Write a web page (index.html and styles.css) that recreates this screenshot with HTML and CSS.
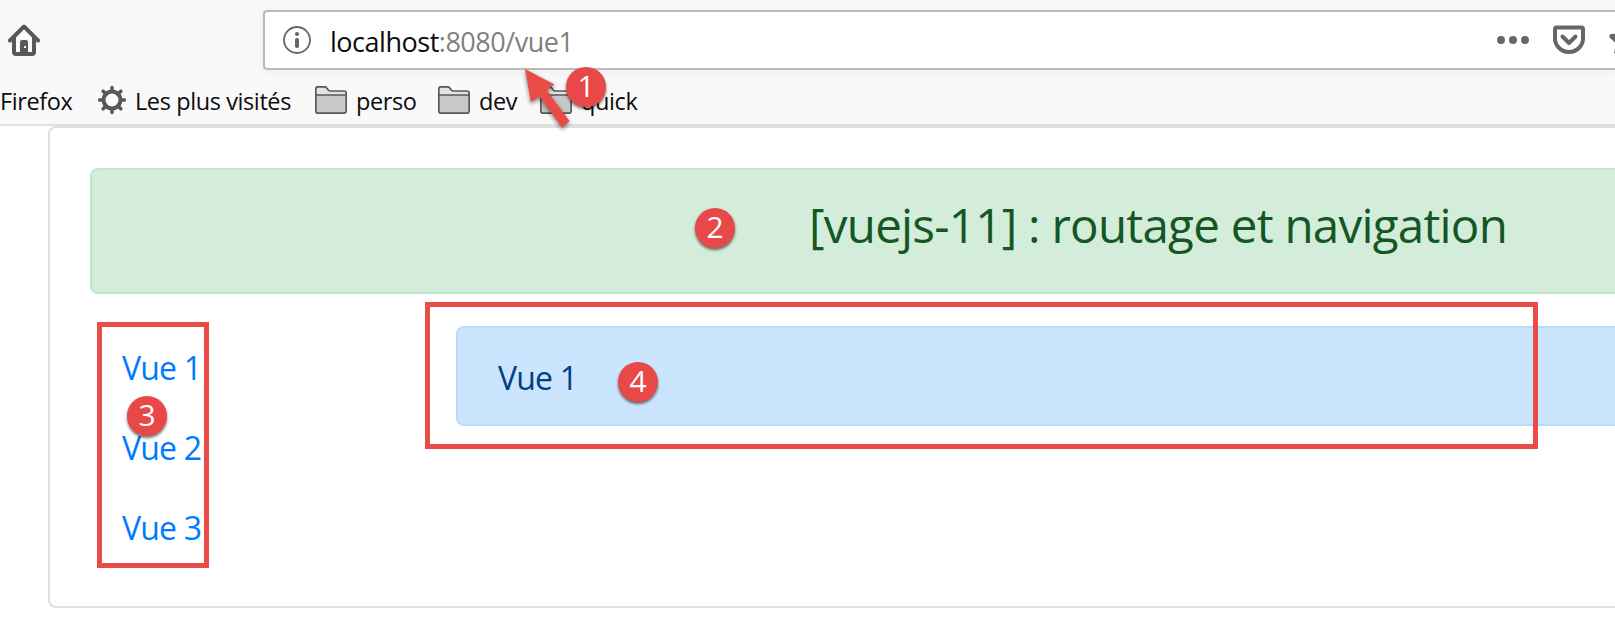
FILE: index.html
```html
<!DOCTYPE html>
<html lang="fr">
<head>
<meta charset="utf-8">
<title>vuejs-11</title>
<link rel="stylesheet" href="styles.css">
</head>
<body>
<svg class="defs" width="0" height="0" aria-hidden="true">
  <symbol id="folder" viewBox="0 0 32 28">
    <path d="M1 9V3q0-2 2-2h6.500q1.500 0 2.500 1.500l1.500 2q.6.500 1.500.500H29q2 0 2 2v2z" fill="#e3e3e4"/>
    <path d="M1 9h30v16q0 2-2 2H3q-2 0-2-2z" fill="#c8c8ca"/>
    <path d="M.8 9h30.400M.8 3q0-2.200 2.200-2.200h6.500q1.500 0 2.500 1.500l1.500 2q.6.700 1.500.700H29q2.200 0 2.200 2V25q0 2.200-2.200 2.200H3Q.8 27.200.8 25z" fill="none" stroke="#58585a" stroke-width="1.700"/>
  </symbol>
</svg>
<header class="browser">
  <div class="toolbar">
    <svg class="home" width="32" height="32" viewBox="0 0 32 32">
      <path d="M2 16.500 16 2.500l14 14M6 14v14q0 2 2 2h16q2 0 2-2V14" fill="none" stroke="#58585a" stroke-width="4" stroke-linecap="round" stroke-linejoin="round"/>
      <path d="M12 30V18q0-2 2-2h4q2 0 2 2v12z" fill="#58585a"/>
      <rect x="16" y="22" width="2" height="2" fill="#f9f9fa"/>
    </svg>
    <div class="urlbar">
      <svg class="info" width="28" height="28" viewBox="0 0 28 28">
        <circle cx="14" cy="14" r="13" fill="none" stroke="#666" stroke-width="1.800"/>
        <circle cx="14" cy="8" r="2.100" fill="#666"/>
        <rect x="12" y="12" width="4" height="10" rx="1.800" fill="#666"/>
      </svg>
      <div class="url">localhost<span class="path">:8080/vue1</span></div>
      <svg class="actions" width="118" height="32" viewBox="0 0 118 32">
        <g fill="#666"><circle cx="4" cy="16" r="4"/><circle cx="16" cy="16" r="4"/><circle cx="28" cy="16" r="4"/></g>
        <path d="M59.500 3.500h25q1.500 0 1.500 1.500v9.500a14 13.500 0 0 1-28 0V5q0-1.500 1.500-1.500z" fill="none" stroke="#666" stroke-width="4"/>
        <path d="m65.500 12.500 6.500 6.500 6.500-6.500" fill="none" stroke="#666" stroke-width="4" stroke-linecap="round" stroke-linejoin="round"/>
        <path d="M128 1 122 9.500l-8 .5q-3 1.500-1 4l6 5.500-2 10 11-5z" fill="#666"/>
      </svg>
    </div>
  </div>
  <nav class="bookmarks">
    <span class="bm firefox">Firefox</span>
    <span class="bm visited">
      <svg width="28" height="28" viewBox="-14 -14 28 28">
        <circle r="8.500" fill="none" stroke="#58585a" stroke-width="4"/>
        <path d="M0-9.500V-12.300M0 9.500v2.800M-9.500 0h-2.800M9.500 0h2.800M-7-7l-1.800-1.800M7-7l1.800-1.800M-7 7l-1.800 1.800M7 7l1.800 1.800" stroke="#58585a" stroke-width="3.600" stroke-linecap="round"/>
      </svg><span>Les plus visités</span></span>
    <span class="bm perso"><svg width="32" height="28"><use href="#folder"/></svg><span>perso</span></span>
    <span class="bm dev"><svg width="32" height="28"><use href="#folder"/></svg><span>dev</span></span>
    <span class="bm quick"><svg width="32" height="28"><use href="#folder"/></svg><span>quick</span></span>
  </nav>
</header>
<main class="card">
  <div class="alert success"><h1>[vuejs-11] : routage et navigation</h1></div>
  <div class="row">
    <nav class="links"><a>Vue 1</a><a>Vue 2</a><a>Vue 3</a></nav>
    <div class="alert primary">Vue 1</div>
  </div>
</main>
<div class="frame frame-nav"></div>
<div class="frame frame-view"></div>
<svg class="arrow" width="60" height="75" viewBox="520 60 60 75">
  <path d="M525 69 554.500 84.500 546.500 90 569.500 121 562 127.500 539.500 96.500 531 102z" fill="#e94b47"/>
</svg>
<div class="badge b1">1</div>
<div class="badge b2">2</div>
<div class="badge b3">3</div>
<div class="badge b4">4</div>
</body>
</html>
```
FILE: styles.css
```css
* { box-sizing: border-box; }
body {
  margin: 0;
  height: 637px;
  overflow: hidden;
  position: relative;
  background: #fff;
  font-family: "Open Sans", "Noto Sans", sans-serif;
}
svg { display: block; flex: none; }
.defs { position: absolute; }
.browser {
  height: 126px;
  background: #f9f9fa;
  border-bottom: 2px solid #e0e0e1;
}
.toolbar { display: flex; padding: 10px 0 0 8px; height: 76px; }
.home { margin-top: 14px; }
.urlbar {
  display: flex;
  align-items: center;
  flex: 1;
  min-width: 0;
  overflow: hidden;
  height: 60px;
  margin-left: 223px;
  padding-left: 18px;
  background: #fff;
  border: 2px solid #bbb;
  border-right: 0;
  border-radius: 4px 0 0 4px;
  box-shadow: 0 2px 8px rgba(0, 0, 0, .06);
}
.url {
  width: 1168px;
  flex: none;
  margin-left: 18px;
  padding: 3px 0 0 1px;
  font-size: 27px;
  letter-spacing: -.48px;
  line-height: 36px;
  white-space: nowrap;
  color: #0c0c0d;
}
.path { color: #808080; }
.bookmarks {
  display: flex;
  height: 48px;
  padding-top: 8px;
  font-size: 23.5px;
  letter-spacing: -.4px;
  line-height: 35px;
  color: #0c0c0d;
  white-space: nowrap;
}
.bm { display: flex; flex: none; gap: 9px; }
.bm svg { margin-top: 2px; }
.firefox { width: 98px; }
.visited { width: 217px; }
.perso { width: 123px; }
.dev { width: 102px; }
.card {
  height: 482px;
  margin-left: 48px;
  padding: 40px 0 0 40px;
  border: 2px solid #dfdfdf;
  border-right: 0;
  border-radius: 8px 0 0 8px;
}
.alert {
  border: 2px solid;
  border-right: 0;
  border-radius: 8px 0 0 8px;
}
.success {
  height: 126px;
  padding: 22px 0 0 717px;
  color: #155724;
  background: #d4edda;
  border-color: #c3e6cb;
}
h1 {
  margin: 0;
  font-size: 47.5px;
  font-weight: 400;
  letter-spacing: -.74px;
  line-height: 66px;
  white-space: nowrap;
}
.row { display: flex; margin-top: 32px; }
.links {
  display: flex;
  flex-direction: column;
  width: 366px;
  flex: none;
  padding: 2px 0 0 32px;
  font-size: 32px;
  letter-spacing: -.8px;
  line-height: 80px;
  color: #007bff;
}
.primary {
  flex: 1;
  height: 100px;
  padding-left: 40px;
  font-size: 32px;
  letter-spacing: -.8px;
  line-height: 99px;
  color: #004085;
  background: #cce5ff;
  border-color: #b8daff;
}
.frame { position: absolute; border: 5px solid #e94b47; }
.frame-nav { left: 97px; top: 322px; width: 112px; height: 246px; }
.frame-view { left: 425px; top: 302px; width: 1113px; height: 147px; }
.arrow {
  position: absolute;
  left: 520px;
  top: 60px;
  overflow: visible;
  filter: drop-shadow(0 2px 2px rgba(0, 0, 0, .5));
}
.badge {
  position: absolute;
  width: 40px;
  height: 40px;
  border-radius: 50%;
  background: #e94848;
  color: #fff;
  box-shadow: 0 2px 3px rgba(0, 0, 0, .55);
  font-size: 30px;
  line-height: 38px;
  text-align: center;
}
.b1 { left: 566px; top: 67px; }
.b2 { left: 695px; top: 208px; }
.b3 { left: 127px; top: 396px; }
.b4 { left: 618px; top: 362px; }
```
